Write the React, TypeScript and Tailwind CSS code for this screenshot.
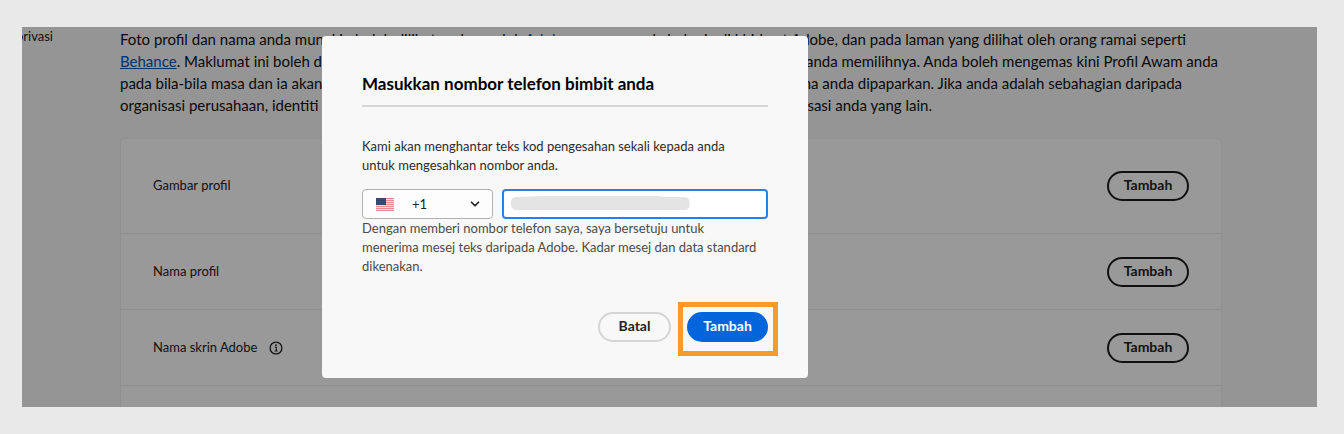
import React, { useState } from 'react';
import { ChevronDown } from 'lucide-react';

interface ProfileRow {
  label: string;
  hasInfo?: boolean;
}

const profileRows: ProfileRow[] = [
  { label: 'Gambar profil' },
  { label: 'Nama profil' },
  { label: 'Nama skrin Adobe', hasInfo: true },
];

const InfoIcon: React.FC = () => (
  <svg width="14" height="14" viewBox="0 0 14 14" fill="none" aria-hidden="true">
    <circle cx="7" cy="7" r="5.9" stroke="#222" strokeWidth="1.3" />
    <circle cx="7" cy="4.2" r="0.9" fill="#222" />
    <path d="M5.8 6.3h1.5v3.6M5.7 10h2.8" stroke="#222" strokeWidth="1.1" />
  </svg>
);

const FlagIcon: React.FC = () => (
  <svg width="18" height="13" viewBox="0 0 18 13" aria-hidden="true">
    <rect width="18" height="13" fill="#f6dcde" />
    {[0, 2, 4, 6, 8, 10, 12].map((y) => (
      <rect key={y} y={y} width="18" height="1" fill="#e88a90" />
    ))}
    <rect width="10" height="7" fill="#34436f" />
    {[1, 3, 5].map((y) => (
      <path key={y} d={`M1 ${y + 0.5}h8`} stroke="#66719a" strokeWidth="0.6" strokeDasharray="0.7 1" />
    ))}
  </svg>
);

const PhoneDialog: React.FC = () => {
  const [country, setCountry] = useState('+1');
  const [phone, setPhone] = useState('');

  return (
    <div
      role="dialog"
      aria-labelledby="phone-title"
      className="mt-[9px] ml-[300px] w-full max-w-[486px] rounded bg-[#f8f8f8] px-10 py-9 text-[13px] leading-[19px] text-[#2c2c2c]"
    >
      <h2
        id="phone-title"
        className="border-b-2 border-[#d8d8d8] pb-[9px] text-[17px] leading-6 font-bold text-black"
      >
        Masukkan nombor telefon bimbit anda
      </h2>
      <p className="mt-[30px] whitespace-nowrap">
        Kami akan menghantar teks kod pengesahan sekali kepada anda
        <br />
        untuk mengesahkan nombor anda.
      </p>

      <div className="mt-[14px] flex gap-[9px]">
        <div className="relative h-[30px] w-[131px]">
          <select
            aria-label="+1"
            value={country}
            onChange={(e) => setCountry(e.target.value)}
            className="h-full w-full appearance-none rounded border border-[#b1b1b1] bg-[#fdfdfd] pl-[49px] text-[13px] text-[#222]"
          >
            <option value="+1">+1</option>
          </select>
          <span className="pointer-events-none absolute inset-y-0 left-[14px] flex items-center">
            <FlagIcon />
          </span>
          <ChevronDown className="pointer-events-none absolute top-2 right-[11px] h-[14px] w-[14px] text-[#222]" strokeWidth={3} />
        </div>
        <div className="relative h-[30px] flex-1">
          <input
            type="tel"
            aria-labelledby="phone-title"
            value={phone}
            onChange={(e) => setPhone(e.target.value)}
            className="h-full w-full rounded border-2 border-[#2d7ee0] bg-white px-2 outline-none"
          />
          {!phone && (
            <svg className="pointer-events-none absolute top-[7px] left-[9px]" width="179" height="15" viewBox="0 0 179 15" aria-hidden="true">
              <path
                d="M6 1C14 1 22 0 30 0H148C150 0 152 1 155 1H173Q178.500 1 178.500 6V9Q178.500 14 173 14H6Q0 14 0 9V6Q0 1 6 1Z"
                fill="#e4e4e4"
              />
            </svg>
          )}
        </div>
      </div>

      <p className="whitespace-nowrap text-[#4b4b4b]">
        Dengan memberi nombor telefon saya, saya bersetuju untuk
        <br />
        menerima mesej teks daripada Adobe. Kadar mesej dan data standard
        <br />
        dikenakan.
      </p>

      <div className="mt-9 flex justify-end gap-4 text-sm leading-5">
        <button type="button" className="h-[30px] w-[73px] rounded-full border-2 border-[#d5d5d5] pb-0.5 font-bold text-[#222]">
          Batal
        </button>
        <div className="relative">
          <button type="button" className="h-[30px] w-[81px] rounded-full bg-[#0265dc] pb-0.5 font-bold text-white">
            Tambah
          </button>
          <span className="pointer-events-none absolute -top-[10px] -right-[10px] -bottom-[14px] -left-[9px] border-5 border-[#f89b2c]" />
        </div>
      </div>
    </div>
  );
};

const App: React.FC = () => {
  return (
    <div className="h-screen bg-[#e9e9e9] py-[27px] pr-[27px] pl-[22px] font-['Lato','Noto_Sans',sans-serif]">
      <div className="relative flex h-full overflow-hidden bg-[#f8f8f8] text-[#222]">
        <aside className="flex w-[31px] shrink-0 justify-end text-[13px] leading-[18px] whitespace-nowrap">
          privasi
        </aside>

        <main className="mr-[95px] ml-[67px] min-w-0 flex-1">
          <div className="pt-px text-[15px] leading-[22px] whitespace-nowrap text-[#111]">
            <div className="flex justify-between pr-9">
              <span>
                Foto profil dan nama anda mungkin boleh dilihat pada produk{' '}
                <a href="#adobe" className="text-[#0054b6] underline">Adobe</a>
              </span>
              <span>semasa anda bekerja di khidmat Adobe, dan pada laman yang dilihat oleh orang ramai seperti</span>
            </div>
            <div className="flex justify-between pr-1">
              <span>
                <a href="#behance" className="text-[#0054b6] underline">Behance</a>. Maklumat ini boleh dilihat
              </span>
              <span>anda memilihnya. Anda boleh mengemas kini Profil Awam anda</span>
            </div>
            <div className="flex justify-between pr-10">
              <span>pada bila-bila masa dan ia akan</span>
              <span>nama anda dipaparkan. Jika anda adalah sebahagian daripada</span>
            </div>
            <div className="flex justify-between pr-[290px]">
              <span>organisasi perusahaan, identiti anda</span>
              <span>organisasi anda yang lain.</span>
            </div>
          </div>

          <div className="mt-[22px] rounded border border-[#f0f0f0] bg-white pb-10 text-[13px]">
            {profileRows.map((row, index) => (
              <div
                key={row.label}
                className={`flex items-center justify-between border-b border-[#ededed] px-8 ${index === 0 ? 'h-[95px]' : 'h-[76px]'}`}
              >
                <div className="flex items-center gap-3">
                  <span>{row.label}</span>
                  {row.hasInfo && <InfoIcon />}
                </div>
                <button type="button" className="h-[30px] w-[82px] rounded-full border-2 border-[#1c1c1c] pb-0.5 text-sm leading-5 font-bold">
                  Tambah
                </button>
              </div>
            ))}
          </div>
        </main>

        <div className="absolute inset-0 bg-black/40">
          <PhoneDialog />
        </div>
      </div>
    </div>
  );
};

export default App;
